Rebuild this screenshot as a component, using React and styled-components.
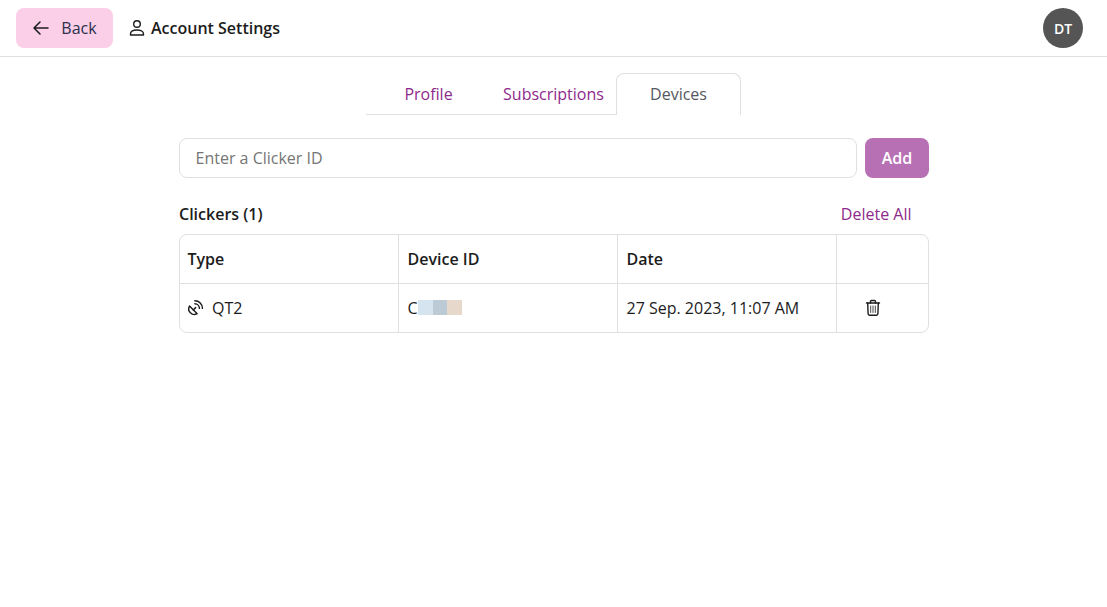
import React from "react";
import styled, { createGlobalStyle } from "styled-components";

const GlobalStyle = createGlobalStyle`
  html, body { margin: 0; padding: 0; background: #fff; }
  body { font-family: "Open Sans", "Noto Sans", sans-serif; color: #1c1c1c; }
`;

const Header = styled.header`
  height: 56px;
  border-bottom: 1px solid #e0e0e0;
  display: flex;
  align-items: center;
  padding: 0 24px 0 16px;
`;

const BackButton = styled.button`
  height: 40px;
  width: 97px;
  border: none;
  border-radius: 8px;
  background: #fbcfe8;
  color: #2b2f4a;
  font: 400 16px "Open Sans", sans-serif;
  display: flex;
  align-items: center;
  justify-content: center;
  gap: 11px;
  padding: 0;
`;

const Title = styled.div`
  margin-left: 16px;
  display: flex;
  align-items: center;
  gap: 6px;
  font-size: 16px;
  font-weight: 600;
  flex: 1;
`;

const Avatar = styled.div`
  width: 40px;
  height: 40px;
  border-radius: 50%;
  background: #555;
  color: #fff;
  font-size: 14px;
  font-weight: 600;
  display: flex;
  align-items: center;
  justify-content: center;
`;

const Tabs = styled.nav`
  display: flex;
  justify-content: center;
  margin-top: 16px;
`;

const Tab = styled.div`
  height: 42px;
  width: ${(p) => p.$w}px;
  display: flex;
  align-items: center;
  justify-content: center;
  font-size: 16px;
  color: ${(p) => (p.$active ? "#55585f" : "#8e2a8b")};
  box-sizing: border-box;
  border-bottom: ${(p) => (p.$active ? "none" : "1px solid #e0e0e0")};
  ${(p) =>
    p.$active &&
    `border: 1px solid #e0e0e0; border-bottom: none; border-radius: 8px 8px 0 0; padding-bottom: 2px;`}
`;

const Content = styled.main`
  width: 750px;
  margin: 23px 0 0 179px;
`;

const AddRow = styled.div`
  display: flex;
  gap: 8px;
`;

const Input = styled.input`
  flex: 1;
  height: 40px;
  box-sizing: border-box;
  border: 1px solid #e0e0e0;
  border-radius: 8px;
  padding: 0 15.5px;
  font: 400 16px "Open Sans", sans-serif;
  &::placeholder { color: #757575; opacity: 1; }
`;

const AddButton = styled.button`
  width: 64px;
  height: 40px;
  border: none;
  border-radius: 8px;
  background: #b870b5;
  color: #fff;
  font: 600 16px "Open Sans", sans-serif;
  padding: 0;
`;

const ListHead = styled.div`
  display: flex;
  justify-content: space-between;
  align-items: center;
  margin-top: 24px;
  height: 24px;
  padding-right: 17.5px;
  font-size: 16px;
  font-weight: 600;
`;

const DeleteAll = styled.span`
  color: #8e2a8b;
  font-size: 16px;
  font-weight: 400;
`;

const Table = styled.div`
  margin-top: 8px;
  border: 1px solid #e0e0e0;
  border-radius: 8px;
  display: grid;
  grid-template-columns: 219px 219px 219px 1fr;
  grid-template-rows: 49px 48px;
`;

const Cell = styled.div`
  display: flex;
  align-items: center;
  gap: 8px;
  padding-left: ${(p) => p.$pad ?? 8}px;
  font-size: 16px;
  font-weight: ${(p) => (p.$head ? 600 : 400)};
  border-right: ${(p) => (p.$last ? "none" : "1px solid #e0e0e0")};
  border-bottom: ${(p) => (p.$head ? "1px solid #e0e0e0" : "none")};
`;

const Blur = styled.span`
  width: ${(p) => p.$w}px;
  height: 15px;
  background: ${(p) => p.$c};
  margin-bottom: 2px;
`;

const DeviceId = styled.div`
  display: flex;
  align-items: center;
`;

const ClickerIcon = () => (
  <svg width="16" height="18" viewBox="2 1 21 23" fill="none" stroke="#1c1c1c" strokeWidth="1.9" strokeLinecap="round" strokeLinejoin="round">
    <path d="M4 10a7.31 7.31 0 0 0 10 10Z" />
    <path d="m9 15 3-3" />
    <path d="M17 13a6 6 0 0 0-6-6" />
    <path d="M21 13A10 10 0 0 0 11 3" />
  </svg>
);

const TrashIcon = () => (
  <svg width="16" height="18" viewBox="0 0 16 18" fill="none" stroke="#1c1c1c" strokeWidth="1.4" strokeLinecap="round" strokeLinejoin="round">
    <path d="M1.5 4h13" />
    <path d="M5.5 4V2.5a1 1 0 0 1 1-1h3a1 1 0 0 1 1 1V4" />
    <path d="M2.7 4l.4 10.8a1.5 1.5 0 0 0 1.5 1.4h6.8a1.5 1.5 0 0 0 1.5-1.4L13.3 4" />
    <path d="M5.7 7v6.5M8 7v6.5M10.3 7v6.5" strokeWidth="1" stroke="#4a4a4a" />
  </svg>
);

const ArrowIcon = () => (
  <svg width="18" height="16" viewBox="0 0 18 16" fill="none" stroke="#1c1c1c" strokeWidth="1.5" strokeLinecap="round" strokeLinejoin="round">
    <path d="M16 8H2M8 2L2 8l6 6" />
  </svg>
);

const PersonIcon = () => (
  <svg width="16" height="18" viewBox="0 0 16 18" fill="none" stroke="#1c1c1c" strokeWidth="1.4" strokeLinejoin="round">
    <circle cx="8" cy="5" r="3.3" />
    <path d="M1.5 16v-1C1.5 12.5 4 11 8 11s6.5 1.5 6.5 4v1Z" />
  </svg>
);

export default function App() {
  return (
    <>
      <GlobalStyle />
      <Header>
        <BackButton><ArrowIcon />Back</BackButton>
        <Title><PersonIcon />Account Settings</Title>
        <Avatar>DT</Avatar>
      </Header>
      <Tabs>
        <Tab $w={125}>Profile</Tab>
        <Tab $w={125}>Subscriptions</Tab>
        <Tab $w={125} $active>Devices</Tab>
      </Tabs>
      <Content>
        <AddRow>
          <Input placeholder="Enter a Clicker ID" />
          <AddButton>Add</AddButton>
        </AddRow>
        <ListHead>
          <span>Clickers (1)</span>
          <DeleteAll>Delete All</DeleteAll>
        </ListHead>
        <Table>
          <Cell $head $pad={7.5}>Type</Cell>
          <Cell $head $pad={8.5}>Device ID</Cell>
          <Cell $head $pad={8.5}>Date</Cell>
          <Cell $head $last />
          <Cell><ClickerIcon />QT2</Cell>
          <Cell $pad={8.5}>
            <DeviceId>
              C
              <Blur $w={15} $c="#d6e4ef" />
              <Blur $w={14} $c="#bccad5" />
              <Blur $w={15} $c="#e6d9cc" />
            </DeviceId>
          </Cell>
          <Cell $pad={8.5}>27 Sep. 2023, 11:07 AM</Cell>
          <Cell $last $pad={28}><TrashIcon /></Cell>
        </Table>
      </Content>
    </>
  );
}
